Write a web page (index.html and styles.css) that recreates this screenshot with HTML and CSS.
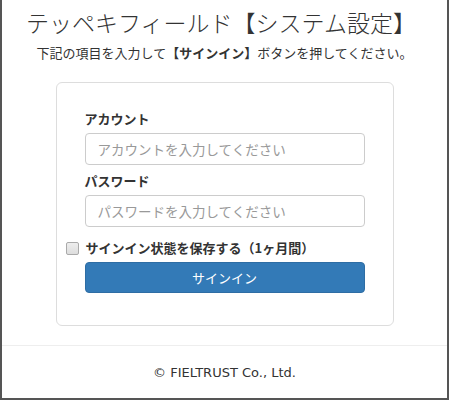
FILE: index.html
```html
<!DOCTYPE html>
<html lang="ja">
<head>
  <meta charset="utf-8">
  <title>テッペキフィールド【システム設定】</title>
  <link rel="stylesheet" href="styles.css">
</head>
<body>
  <div class="frame">
    <div class="header">
      <h1 class="title">テッペキフィールド【システム設定】</h1>
      <p class="lead">下記の項目を入力して<strong>【サインイン】</strong>ボタンを押してください。</p>
    </div>

    <div class="card">
      <form class="signin">
        <label class="field-label" for="account">アカウント</label>
        <input class="field" id="account" type="text" placeholder="アカウントを入力してください">

        <label class="field-label" for="password">パスワード</label>
        <input class="field" id="password" type="password" placeholder="パスワードを入力してください">

        <label class="remember">
          <input type="checkbox" class="remember-box">
          <span>サインイン状態を保存する（1ヶ月間）</span>
        </label>

        <button type="button" class="btn-signin">サインイン</button>
      </form>
    </div>

    <div class="footer">
      <p>&copy; FIELTRUST Co., Ltd.</p>
    </div>
  </div>
</body>
</html>
```

FILE: styles.css
```css
html, body {
  margin: 0;
  padding: 0;
  background-color: #fff;
}
body {
  font-family: "Noto Sans CJK JP", "Noto Sans", sans-serif;
  color: #333;
}
.frame {
  height: 398px;
  border: 2px solid #555;
  border-top: none;
  display: flex;
  flex-direction: column;
}
.header {
  text-align: center;
}
.title {
  margin: 7px 0 0;
  padding-right: 7px;
  font-size: 23px;
  font-weight: 300;
  line-height: 30px;
  color: #333;
}
.lead {
  margin: 6px 0 0;
  font-size: 13px;
  line-height: 20px;
}
.lead strong {
  font-weight: bold;
}
.card {
  width: 280px;
  margin: 19px auto 0;
  padding: 26px 28px 32px;
  border: 1px solid #ddd;
  border-radius: 6px;
}
.signin {
  display: flex;
  flex-direction: column;
}
.field-label {
  font-size: 13px;
  font-weight: bold;
  line-height: 20px;
  margin-bottom: 4px;
}
.field {
  box-sizing: border-box;
  height: 32px;
  padding: 0 12px;
  margin-bottom: 6px;
  border: 1px solid #ccc;
  border-radius: 4px;
  font-family: inherit;
  font-size: 13.5px;
  color: #555;
}
.field::placeholder {
  color: #999;
}
.remember {
  display: flex;
  align-items: center;
  margin: 5px 0 4px -20px;
  font-size: 13px;
  font-weight: bold;
  line-height: 20px;
}
.remember-box {
  appearance: none;
  box-sizing: border-box;
  width: 13px;
  height: 13px;
  margin: 1px 7px 0 1px;
  border: 1px solid #aaa;
  border-radius: 2px;
  background: linear-gradient(#eee, #ddd);
}
.btn-signin {
  height: 31px;
  border: 1px solid #2e6da4;
  border-radius: 4px;
  background-color: #337ab7;
  color: #fff;
  font-family: inherit;
  font-size: 13px;
}
.footer {
  margin-top: 19px;
  border-top: 1px solid #eee;
  text-align: center;
}
.footer p {
  margin: 17px 0 0;
  font-family: "DejaVu Sans", "Noto Sans", sans-serif;
  font-size: 13px;
  line-height: 20px;
}
```
